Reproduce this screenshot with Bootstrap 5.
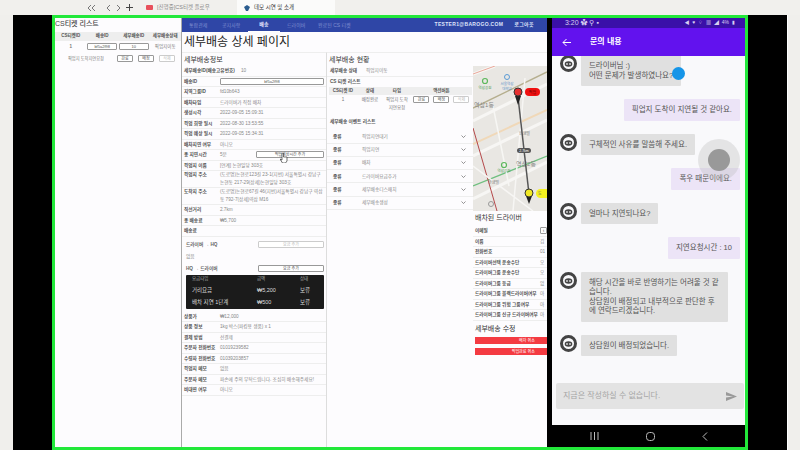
<!DOCTYPE html>
<html lang="ko">
<head>
  <meta charset="UTF-8" />
  <meta name="viewport" content="width=device-width, initial-scale=1.0"/>
  <title>데모 시연 및 소개</title>

  <link href="https://cdn.jsdelivr.net/npm/bootstrap@5.3.3/dist/css/bootstrap.min.css" rel="stylesheet">
  <script src="https://cdn.jsdelivr.net/npm/bootstrap@5.3.3/dist/js/bootstrap.bundle.min.js"></script>

  <style>
    html, body {
      height: 450px;
      overflow: hidden;
    }

    body {
      font-family: "Liberation Sans", "Noto Sans CJK KR", sans-serif;
      background-color: #f0efec;
      color: #444;
      font-size: 5px;
      line-height: 1.5;
      position: relative;
    }

    /* 브라우저 탭 */
    .tab-strip {
      height: 15px;
      background-color: #f1f0ed;
    }

    .tab-arrows {
      width: 146px;
      padding-left: 87px;
      gap: 5px;
      color: #666;
      font-size: 9px;
    }

    .tab-idle {
      width: 91px;
      color: #888;
      font-size: 5.5px;
    }

    .tab-active {
      width: 98px;
      padding-left: 7px;
      background-color: #fbfbfa;
      color: #333;
      font-size: 5.5px;
    }

    .stage {
      height: 435px;
    }

    .pad-left { width: 13px; }
    .pad-black { width: 39px; background-color: #000; }
    .pad-black-right { width: 39px; background-color: #000; }
    .pad-right { width: 13px; border-left: 1px solid #fff; }

    .demo-frame {
      width: 697px;
      border: 3px solid #22e83a;
      background-color: #fff;
    }

    /* CS 티켓 패널 */
    .cs-panel {
      width: 127px;
      background-color: #fdfcfe;
      border-right: 1px solid #aaa;
    }

    .cs-title {
      font-size: 7px;
      line-height: 10px;
      padding: 1px 0 3px 0;
      color: #444;
      margin: 0;
    }

    .grid-table {
      margin: 0;
      font-size: 4.5px;
      --bs-table-bg: transparent;
      table-layout: fixed;
    }

    .grid-table th {
      background-color: #eee;
      padding: 1px 0;
      border: 0;
      font-weight: 600;
      color: #555;
      text-align: center;
    }

    .grid-table td {
      padding: 2px 0;
      border: 0;
      text-align: center;
      vertical-align: middle;
      color: #777;
      line-height: 8px;
    }

    .mini-btn {
      font-size: 4px;
      line-height: 5px;
      padding: 0;
      height: 7px;
      border: 1px solid #999;
      border-radius: 1px;
      background: #fff;
      color: #555;
    }

    .mini-btn.dimmed {
      border-color: #ccc;
      color: #bbb;
    }

    .act-btn { width: 16px; }
    .id-btn { width: 30px; }

    .ticket-act {
      height: 12px;
      padding-left: 5px;
      gap: 5px;
      color: #777;
      font-size: 4.2px;
    }

    .ticket-act .ticket-text { width: 52px; text-align: center; white-space: nowrap; }

    /* 상단 메뉴 */
    .app-col {
      width: 365px;
      background-color: #fdfcfe;
    }

    .app-nav {
      height: 14px;
      background-color: #2f46a6;
      padding: 0;
      font-size: 5px;
      flex-wrap: nowrap;
    }

    .app-nav .nav-link {
      padding: 0;
      color: #7f8fd0;
      line-height: 13px;
      white-space: nowrap;
    }

    .app-nav .nav-link.active {
      color: #e8ecff;
      font-weight: 700;
      border-bottom: 1px solid #fff;
      width: 32px;
      height: 14px;
      text-align: center;
    }

    .app-nav .nav-one { width: 40px; padding-left: 7px; }
    .app-nav .nav-notice { width: 26px; }
    .app-nav .nav-driver { width: 31px; margin-left: 7px; }

    .nav-user {
      color: #dfe4fa;
      letter-spacing: .32px;
      font-size: 5px;
      font-weight: 600;
    }

    .nav-logout { margin: 0 13px 0 11px; }

    .page-title {
      font-size: 12px;
      line-height: 18px;
      margin: 0;
      padding: 1px 0 0 2px;
      height: 20px;
      color: #222;
      font-weight: 400;
    }

    .info-col {
      width: 145px;
      border-top: 1px solid #eee;
      border-right: 1px solid #ddd;
    }

    .status-col {
      width: 146px;
      border-top: 1px solid #eee;
    }

    .driver-col {
      width: 74px;
      border-top: 1px solid #eee;
      overflow: hidden;
    }

    .sec-title {
      font-size: 7px;
      line-height: 13px;
      margin: 0;
      padding-left: 2px;
      color: #333;
      font-weight: 400;
    }

    .fld-row {
      min-height: 10.5px;
      line-height: 9.5px;
      padding: 0 0 0 2px;
      border-bottom: 1px solid #eee;
      font-size: 4.7px;
      color: #888;
      background: transparent;
    }

    .fld-row b {
      flex: none;
      width: 36px;
      font-weight: 600;
      color: #555;
    }

    .fld-row b.auto-label {
      width: auto;
      margin-right: 6px;
    }

    .delay-val { width: 36px; }

    .wrap-row {
      line-height: 8px;
    }

    .wide-btn {
      flex: 1;
      margin-right: 2px;
      height: 7px;
    }

    .half-btn {
      width: 66px;
      height: 7px;
    }

    .fee-row {
      height: 12px;
      padding: 0 2px 0 4px;
      font-size: 4.7px;
      color: #666;
      font-weight: 600;
    }

    .fee-row.first-fee { margin-top: 2px; }

    .fee-row.plain-fee {
      font-weight: 400;
      color: #888;
    }

    .fee-card {
      margin: 0 2px 3px 4px;
      height: 34px;
      background-color: #1b1b1b;
      border-radius: 1px;
      color: #ddd;
    }

    .fee-card .fee-head {
      height: 10px;
      color: #aaa;
      font-size: 4.5px;
    }

    .fee-card .fee-item {
      height: 12px;
      font-size: 5.5px;
    }

    .fee-a { width: 71px; padding-left: 6px; }
    .fee-b { width: 43px; }

    /* 현황 */
    .sec-title.status-title { padding-left: 2px; }

    .st-row {
      min-height: 10.5px;
      line-height: 9.5px;
      padding-left: 3px;
      font-size: 4.7px;
      color: #888;
      border-bottom: 1px solid #eee;
    }

    .st-row b { width: 36px; flex: none; font-weight: 600; color: #555; }

    .st-label {
      font-size: 4.7px;
      font-weight: 600;
      color: #555;
      padding-left: 3px;
      line-height: 10px;
    }

    .st-label.ev-label { margin: 4px 0 3px 0; }

    .st-table { width: 143px; margin-left: 2px; }
    .st-table td { line-height: 8px; padding: 1px 0; }
    .st-table .col-id { width: 28px; }
    .st-table .col-state { width: 26px; }
    .st-table .col-type { width: 28px; }

    .ev-row {
      height: 13.3px;
      padding: 0 7px 0 6px;
      border-bottom: 1px solid #eee;
      font-size: 4.7px;
      color: #888;
    }

    .ev-row b { width: 29px; flex: none; font-weight: 600; color: #555; }

    /* 드라이버 */
    .map-box {
      display: block;
      margin-top: 13px;
    }

    .drv-title {
      font-size: 7px;
      line-height: 12px;
      margin: 1px 0 2px 2px;
      color: #333;
      font-weight: 400;
      white-space: nowrap;
    }

    .drv-title.edit-title { margin: 2px 0 2px 2px; }

    .drv-row {
      height: 10.5px;
      line-height: 9.5px;
      padding-left: 2px;
      border-bottom: 1px solid #eee;
      font-size: 4.7px;
      color: #888;
      white-space: nowrap;
    }

    .drv-row b { width: 65px; flex: none; font-weight: 600; color: #555; }

    .drv-btn { width: 7px; }

    .red-btn {
      display: block;
      width: 72px;
      margin: 0 0 4px 2px;
      height: 7px;
      padding: 0 12px 0 0;
      border: 0;
      border-radius: 0;
      background-color: #f43b42;
      color: #fff;
      font-size: 4px;
      line-height: 7px;
      text-align: right;
    }

    /* 휴대폰 */
    .phone-edge {
      width: 5px;
      background-color: #000;
    }

    .phone {
      width: 193px;
      background-color: #f9f9fb;
    }

    .phone-status {
      height: 10px;
      background-color: #3a10a8;
      color: #d8cff0;
      padding: 0 10px 0 13px;
      font-size: 7px;
    }

    .status-icons {
      font-size: 5px;
      word-spacing: 1.5px;
    }

    .phone-bar {
      height: 28px;
      background-color: #6212ee;
      color: #fff;
      padding-left: 10px;
      font-size: 8px;
      font-weight: 700;
    }

    .phone-bar .bar-title { margin-left: 19px; }

    .chat-area {
      flex: 1;
      overflow: hidden;
      padding: 0 5px 0 8px;
    }

    .chat-left, .chat-right {
      margin-bottom: 13px;
    }

    .chat-left:first-child { margin-top: -1px; }

    .chat-right { text-align: right; }

    .bubble {
      display: inline-block;
      text-align: left;
      font-size: 7.5px;
      line-height: 9.5px;
      color: #555;
      padding: 6px 8px;
      border-radius: 1px;
      background-color: #e0e0e0;
    }

    .bubble.long-bubble { width: 147px; }

    .chat-right .bubble { background-color: #ece4f7; }

    .face {
      flex: none;
      width: 17px;
      height: 17px;
      margin-right: 4px;
    }

    .chat-input {
      height: 26px;
      margin: 0 1px 16px 4px;
      background-color: #e3e3e3;
      color: #a5a5a5;
      font-size: 8px;
      padding: 0 7px;
      border-radius: 2px;
    }

    .phone-nav {
      height: 22px;
      background-color: #000;
      color: #bbb;
      padding: 0 37px 0 38px;
    }

    /* 화면 위 터치 표시 */
    .touch-big {
      position: absolute;
      left: 698px;
      top: 139px;
      width: 42px;
      height: 42px;
      border-radius: 50%;
      background-color: rgba(190, 190, 190, .35);
    }

    .touch-big::after {
      content: "";
      position: absolute;
      left: 10px;
      top: 10px;
      width: 22px;
      height: 22px;
      border-radius: 50%;
      background-color: #999;
    }

    .touch-blue {
      position: absolute;
      left: 672px;
      top: 67px;
      width: 13px;
      height: 13px;
      border-radius: 50%;
      background-color: #1595e8;
    }

    .touch-hand {
      position: absolute;
      left: 280px;
      top: 153px;
    }
  </style>
</head>
<body>

  <div class="tab-strip d-flex align-items-center">
    <div class="tab-arrows d-flex align-items-center">
      <svg width="10" height="8" viewBox="0 0 10 8" fill="none" stroke="#777"><path d="M4 1 1 4l3 3M8 1 5 4l3 3"/></svg>
      <svg class="ms-1" width="5" height="8" viewBox="0 0 5 8" fill="none" stroke="#777"><path d="M4 1 1 4l3 3"/></svg>
      <svg width="5" height="8" viewBox="0 0 5 8" fill="none" stroke="#777"><path d="M1 1l3 3-3 3"/></svg>
      <svg width="7" height="7" viewBox="0 0 7 7" fill="none" stroke="#444"><path d="M3.5 0v7M0 3.5h7"/></svg>
    </div>
    <div class="tab-idle d-flex align-items-center gap-1">
      <svg width="7" height="5" viewBox="0 0 7 5"><rect width="7" height="5" rx="1" fill="#e8505b"/></svg>
      <span class="text-nowrap">[진행중]CS티켓 플로우</span>
    </div>
    <div class="tab-active d-flex align-items-center gap-1 align-self-stretch">
      <svg width="6" height="6" viewBox="0 0 6 6"><path d="M3 0 6 2 4 6H2L0 2z" fill="#2b5d8f"/></svg>
      <span class="text-nowrap">데모 시연 및 소개</span>
    </div>
  </div>

  <div class="stage d-flex">
    <div class="pad-left"></div>
    <div class="pad-black"></div>

    <div class="demo-frame d-flex">

      <!-- CS티켓 리스트 -->
      <div class="cs-panel flex-shrink-0">
        <h5 class="cs-title">CS티켓 리스트</h5>
        <table class="table grid-table">
          <thead><tr><th>CS티켓ID</th><th>배송ID</th><th>세부배송ID</th><th>세부배송상태</th></tr></thead>
          <tbody><tr>
            <td><b>1</b></td>
            <td><button class="btn mini-btn id-btn">bf5a2f98</button></td>
            <td><button class="btn mini-btn id-btn">10</button></td>
            <td>픽업지이동</td>
          </tr></tbody>
        </table>
        <div class="ticket-act d-flex align-items-center">
          <span class="ticket-text">픽업지 도착지연요청</span>
          <button class="btn mini-btn act-btn">완료</button>
          <button class="btn mini-btn act-btn">배정</button>
          <button class="btn mini-btn act-btn dimmed">삭제</button>
        </div>
      </div>

      <div class="app-col flex-shrink-0 d-flex flex-column">
        <nav class="navbar app-nav d-flex justify-content-start">
          <a class="nav-link nav-one" href="#">통합관제</a>
          <a class="nav-link nav-notice" href="#">공지사항</a>
          <a class="nav-link active" href="#">배송</a>
          <a class="nav-link nav-driver" href="#">드라이버</a>
          <a class="nav-link" href="#">완료된 CS 티켓</a>
          <span class="nav-user ms-auto">TESTER1@BAROGO.COM</span>
          <span class="nav-user nav-logout">로그아웃</span>
        </nav>
        <h1 class="page-title">세부배송 상세 페이지</h1>

        <div class="d-flex flex-grow-1">
          <!-- 세부배송정보 -->
          <div class="info-col flex-shrink-0">
            <h4 class="sec-title">세부배송정보</h4>
            <div class="fld-row d-flex align-items-center text-nowrap"><b class="auto-label">세부배송ID(배송고유번호)</b>10</div>
            <div class="fld-row d-flex align-items-center"><b>배송ID</b><button class="btn mini-btn wide-btn">bf5a2f98</button></div>
            <div class="fld-row d-flex align-items-center"><b>지역그룹ID</b>fd10b643</div>
            <div class="fld-row d-flex align-items-center"><b>배차타입</b>드라이버가 직접 배차</div>
            <div class="fld-row d-flex align-items-center"><b>생성시각</b>2022-09-05 15:09:31</div>
            <div class="fld-row d-flex align-items-center"><b>픽업 희망 일시</b>2022-08-30 13:53:55</div>
            <div class="fld-row d-flex align-items-center"><b>픽업 예상 일시</b>2022-09-05 15:34:31</div>
            <div class="fld-row d-flex align-items-center"><b>배차지연 여부</b>아니오</div>
            <div class="fld-row d-flex align-items-center"><b>총 지연시간</b><span class="delay-val">5분</span><button class="btn mini-btn wide-btn">픽업예상시간 추가</button></div>
            <div class="fld-row d-flex align-items-center"><b>픽업지 이름</b>[연계] 논현일당 303호</div>
            <div class="fld-row wrap-row d-flex"><b>픽업지 주소</b><span>(도로명)논현로123길 23-1(지번) 서울특별시 강남구 논현동 217-29(상세)논현일당 303호</span></div>
            <div class="fld-row wrap-row d-flex"><b>도착지 주소</b><span>(도로명)논현로67길 46(지번)서울특별시 강남구 역삼동 792-7(상세)역삼 M16</span></div>
            <div class="fld-row d-flex align-items-center"><b>직선거리</b>2.7km</div>
            <div class="fld-row d-flex align-items-center"><b>총 배송료</b>₩5,700</div>
            <div class="fld-row d-flex align-items-center"><b>배송료</b></div>
            <div class="fee-row first-fee d-flex align-items-center justify-content-between"><span>드라이버 → HQ</span><button class="btn mini-btn half-btn dimmed">요금 추가</button></div>
            <div class="fee-row plain-fee d-flex align-items-center">없음</div>
            <div class="fee-row d-flex align-items-center justify-content-between"><span>HQ → 드라이버</span><button class="btn mini-btn half-btn">요금 추가</button></div>
            <div class="fee-card">
              <div class="fee-head d-flex align-items-center"><span class="fee-a">요금타입</span><span class="fee-b">금액</span><span>상태</span></div>
              <div class="fee-item d-flex align-items-center"><span class="fee-a">거리요금</span><span class="fee-b">₩5,200</span><span>보류</span></div>
              <div class="fee-item d-flex align-items-center"><span class="fee-a">배차 지연 1단계</span><span class="fee-b">₩500</span><span>보류</span></div>
            </div>
            <div class="fld-row d-flex align-items-center"><b>상품가</b>₩12,000</div>
            <div class="fld-row d-flex align-items-center"><b>상품 정보</b>1kg 박스(파킹용 생품) x 1</div>
            <div class="fld-row d-flex align-items-center"><b>결제 방법</b>선결제</div>
            <div class="fld-row d-flex align-items-center"><b>주문자 전화번호</b>01019239582</div>
            <div class="fld-row d-flex align-items-center"><b>수령자 전화번호</b>01039203857</div>
            <div class="fld-row d-flex align-items-center"><b>픽업지 메모</b>없음</div>
            <div class="fld-row d-flex align-items-center"><b>주문자 메모</b>파손에 주의 부탁드립니다. 조심히 배송해주세요!</div>
            <div class="fld-row d-flex align-items-center"><b>비대면 여부</b>아니오</div>
          </div>

          <!-- 세부배송 현황 -->
          <div class="status-col flex-shrink-0">
            <h4 class="sec-title status-title">세부배송 현황</h4>
            <div class="st-row d-flex align-items-center"><b>세부배송 상태</b>픽업지이동</div>
            <div class="st-label">CS 티켓 리스트</div>
            <table class="table grid-table st-table">
              <thead><tr><th class="col-id">CS티켓 ID</th><th class="col-state">상태</th><th class="col-type">타입</th><th>액션버튼</th></tr></thead>
              <tbody><tr>
                <td class="align-top">1</td>
                <td class="align-top">배정완료</td>
                <td>픽업지 도착<br>지연요청</td>
                <td class="align-top">
                  <div class="d-flex gap-1 justify-content-center">
                    <button class="btn mini-btn act-btn">완료</button>
                    <button class="btn mini-btn act-btn">배정</button>
                    <button class="btn mini-btn act-btn dimmed">삭제</button>
                  </div>
                </td>
              </tr></tbody>
            </table>
            <div class="st-label ev-label">세부배송 이벤트 리스트</div>
            <div class="ev-row d-flex align-items-center"><b>종류</b><span class="flex-grow-1">픽업지연대기</span><svg width="5" height="3" viewBox="0 0 5 3" fill="none" stroke="#666" stroke-width=".7"><path d="M.5.5 2.5 2.5 4.5.5"/></svg></div>
            <div class="ev-row d-flex align-items-center"><b>종류</b><span class="flex-grow-1">픽업지연</span><svg width="5" height="3" viewBox="0 0 5 3" fill="none" stroke="#666" stroke-width=".7"><path d="M.5.5 2.5 2.5 4.5.5"/></svg></div>
            <div class="ev-row d-flex align-items-center"><b>종류</b><span class="flex-grow-1">배차</span><svg width="5" height="3" viewBox="0 0 5 3" fill="none" stroke="#666" stroke-width=".7"><path d="M.5.5 2.5 2.5 4.5.5"/></svg></div>
            <div class="ev-row d-flex align-items-center"><b>종류</b><span class="flex-grow-1">드라이버요금추가</span><svg width="5" height="3" viewBox="0 0 5 3" fill="none" stroke="#666" stroke-width=".7"><path d="M.5.5 2.5 2.5 4.5.5"/></svg></div>
            <div class="ev-row d-flex align-items-center"><b>종류</b><span class="flex-grow-1">세부배송디스패치</span><svg width="5" height="3" viewBox="0 0 5 3" fill="none" stroke="#666" stroke-width=".7"><path d="M.5.5 2.5 2.5 4.5.5"/></svg></div>
            <div class="ev-row d-flex align-items-center"><b>종류</b><span class="flex-grow-1">세부배송생성</span><svg width="5" height="3" viewBox="0 0 5 3" fill="none" stroke="#666" stroke-width=".7"><path d="M.5.5 2.5 2.5 4.5.5"/></svg></div>
          </div>

          <!-- 지도 + 드라이버 -->
          <div class="driver-col flex-shrink-0">
            <svg class="map-box" width="74" height="145" viewBox="0 0 74 145">
              <rect width="74" height="145" fill="#e9e7e3"/>
              <path d="M0 8 22 0M0 55 74 18M0 90 74 54M0 133 74 96" fill="none" stroke="#f7f6f4" stroke-width="3"/>
              <path d="M0 8 22 0" stroke="#e9a79a" stroke-width="1" fill="none"/>
              <path d="M0 42 74 6" stroke="#b5ae8e" stroke-width="1.5" fill="none"/>
              <path d="M0 78 74 44" stroke="#f0d8b8" stroke-width="2" fill="none"/>
              <path d="M0 120 74 90" stroke="#6fbf7f" stroke-width="1.3" fill="none"/>
              <path d="M0 62 24 145" stroke="#b4484a" stroke-width="1" fill="none"/>
              <path d="M52 12 40 145M20 40 36 120M0 100 60 145" stroke="#f7f6f4" stroke-width="1.5" fill="none"/>
              <circle cx="12" cy="15" r="2.5" fill="none" stroke="#5cb85c" stroke-width="1.2"/>
              <text x="12" y="23" font-size="3.5" fill="#4d9a58" text-anchor="middle">역삼공원</text>
              <circle cx="34" cy="11" r="2.5" fill="none" stroke="#5b9bd5" stroke-width="1"/>
              <text x="34" y="19" font-size="3.5" fill="#5b8fc7" text-anchor="middle">서울역삼</text>
              <text x="34" y="24" font-size="3.5" fill="#5b8fc7" text-anchor="middle">대학교</text>
              <text x="1" y="41" font-size="6" fill="#888">역삼1동</text>
              <text x="46" y="69" font-size="4" fill="#777">한샘빌</text>
              <circle cx="31" cy="99" r="2.5" fill="none" stroke="#5cb85c" stroke-width="1.2"/>
              <text x="31" y="106" font-size="3.5" fill="#4d9a58" text-anchor="middle">역삼공원</text>
              <text x="43" y="100" font-size="6" fill="#888">역삼2동</text>
              <text x="15" y="118" font-size="4" fill="#777">한샘빌</text>
              <circle cx="18" cy="138" r="2.5" fill="none" stroke="#999"/>
              <line x1="45" y1="31" x2="56" y2="128" stroke="#555" stroke-width="1.5"/>
              <rect x="44" y="82" width="14" height="5" rx="2.5" fill="#555"/>
              <text x="51" y="86" font-size="3.5" fill="#fff" text-anchor="middle">2.7km</text>
              <path d="M42 30h6l-3 9z" fill="#222"/>
              <circle cx="45" cy="26" r="4" fill="#e53030" stroke="#333"/>
              <rect x="52" y="22" width="15" height="8" rx="4" fill="#f01010"/>
              <text x="59.5" y="28" font-size="4" fill="#600" text-anchor="middle">픽업</text>
              <path d="M53 130h6l-3 8z" fill="#222"/>
              <circle cx="56" cy="127" r="4" fill="#f2e925" stroke="#333"/>
              <rect x="63" y="123" width="15" height="9" rx="4.5" fill="#f4f020"/>
              <text x="65" y="129" font-size="4" fill="#665">도</text>
            </svg>
            <h4 class="drv-title">배차된 드라이버</h4>
            <div class="drv-row d-flex align-items-center"><b>이메일</b><button class="btn mini-btn drv-btn">t</button></div>
            <div class="drv-row d-flex align-items-center"><b>이름</b>김</div>
            <div class="drv-row d-flex align-items-center"><b>전화번호</b>01</div>
            <div class="drv-row d-flex align-items-center"><b>드라이버선택 운송수단</b>오</div>
            <div class="drv-row d-flex align-items-center"><b>드라이버그룹 운송수단</b>오</div>
            <div class="drv-row d-flex align-items-center"><b>드라이버그룹 등급</b>없</div>
            <div class="drv-row d-flex align-items-center"><b>드라이버그룹 블랙드라이버여부</b>아</div>
            <div class="drv-row d-flex align-items-center"><b>드라이버그룹 위험 그룹여부</b>아</div>
            <div class="drv-row d-flex align-items-center"><b>드라이버그룹 신규 드라이버여부</b>아</div>
            <h4 class="drv-title edit-title">세부배송 수정</h4>
            <button class="btn red-btn">배차 취소</button>
            <button class="btn red-btn">픽업완료 취소</button>
          </div>
        </div>
      </div>

      <div class="phone-edge flex-shrink-0"></div>

      <!-- 문의 내용 화면 -->
      <div class="phone flex-shrink-0 d-flex flex-column">
        <div class="phone-status d-flex align-items-center justify-content-between">
          <span>3:20 ✿ ⚲ ▪</span>
          <span class="status-icons">◀ ♥ ⌔ ▦ ◢ 4% ▮</span>
        </div>
        <div class="phone-bar d-flex align-items-center">
          <svg width="9" height="9" viewBox="0 0 9 9" fill="none" stroke="#fff" stroke-width="1"><path d="M9 4.5H1M4.5 1 1 4.5 4.5 8"/></svg>
          <span class="bar-title">문의 내용</span>
        </div>
        <div class="chat-area">
          <div class="chat-left d-flex">
            <svg class="face" viewBox="0 0 17 17"><use href="#bot-face"/></svg>
            <div class="bubble">드라이버님 :)<br>어떤 문제가 발생하였나요?</div>
          </div>
          <div class="chat-right"><div class="bubble">픽업지 도착이 지연될 것 같아요.</div></div>
          <div class="chat-left d-flex">
            <svg class="face" viewBox="0 0 17 17"><use href="#bot-face"/></svg>
            <div class="bubble">구체적인 사유를 말씀해 주세요.</div>
          </div>
          <div class="chat-right"><div class="bubble">폭우 때문이에요.</div></div>
          <div class="chat-left d-flex">
            <svg class="face" viewBox="0 0 17 17"><use href="#bot-face"/></svg>
            <div class="bubble">얼마나 지연되나요?</div>
          </div>
          <div class="chat-right"><div class="bubble">지연요청시간 : 10</div></div>
          <div class="chat-left d-flex">
            <svg class="face" viewBox="0 0 17 17"><use href="#bot-face"/></svg>
            <div class="bubble long-bubble">해당 시간을 바로 반영하기는 어려울 것 같습니다.<br>상담원이 배정되고 내부적으로 판단한 후에 연락드리겠습니다.</div>
          </div>
          <div class="chat-left d-flex">
            <svg class="face" viewBox="0 0 17 17"><use href="#bot-face"/></svg>
            <div class="bubble">상담원이 배정되었습니다.</div>
          </div>
        </div>
        <div class="chat-input d-flex align-items-center justify-content-between flex-shrink-0">
          <span>지금은 작성하실 수 없습니다.</span>
          <svg width="11" height="9" viewBox="0 0 11 9"><path d="M0 0 11 4.5 0 9 0 5.5 7 4.5 0 3.5z" fill="#999"/></svg>
        </div>
        <div class="phone-nav d-flex align-items-center justify-content-between flex-shrink-0">
          <svg width="9" height="8" viewBox="0 0 9 8" fill="none" stroke="#bbb"><path d="M1 0v8M4.5 0v8M8 0v8"/></svg>
          <svg width="9" height="9" viewBox="0 0 9 9" fill="none" stroke="#bbb"><rect x=".5" y=".5" width="8" height="8" rx="3"/></svg>
          <svg width="6" height="9" viewBox="0 0 6 9" fill="none" stroke="#bbb"><path d="M5 .5 1 4.5 5 8.5"/></svg>
        </div>
      </div>
    </div>

    <div class="pad-black-right"></div>
    <div class="pad-right flex-grow-1"></div>
  </div>

  <!-- 터치 표시 -->
  <div class="touch-big"></div>
  <div class="touch-blue"></div>
  <svg class="touch-hand" width="8" height="10" viewBox="0 0 8 10"><path d="M2 0h1.5v4H7v4L5.5 10h-3L0 6l2 1z" fill="#fff" stroke="#333" stroke-width=".7"/></svg>

  <svg width="0" height="0" class="position-absolute">
    <symbol id="bot-face" viewBox="0 0 17 17">
      <circle cx="8.5" cy="8.5" r="7" fill="none" stroke="#444" stroke-width="3"/>
      <ellipse cx="8.5" cy="9" rx="3.8" ry="2.8" fill="#444"/>
      <circle cx="7" cy="9" r=".9" fill="#ddd"/>
      <circle cx="10" cy="9" r=".9" fill="#ddd"/>
    </symbol>
  </svg>

</body>
</html>
